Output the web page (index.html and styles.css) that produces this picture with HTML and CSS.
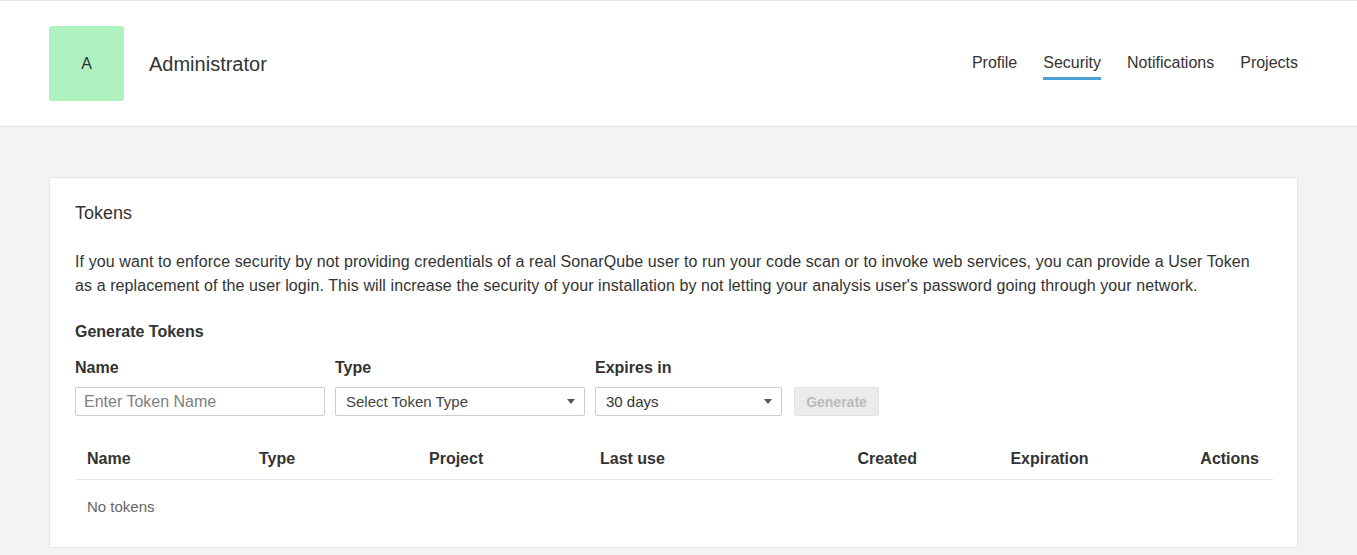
FILE: index.html
```html
<!DOCTYPE html>
<html lang="en">
<head>
<meta charset="utf-8">
<title>Security - Administrator</title>
<link rel="stylesheet" href="styles.css">
</head>
<body>
<header class="account-header">
  <div class="header-inner">
    <div class="user">
      <div class="avatar">A</div>
      <h1 class="user-name">Administrator</h1>
    </div>
    <nav class="account-nav">
      <a class="nav-link" href="#">Profile</a>
      <a class="nav-link active" href="#">Security</a>
      <a class="nav-link" href="#">Notifications</a>
      <a class="nav-link" href="#">Projects</a>
    </nav>
  </div>
</header>
<main class="page">
  <section class="card">
    <h2 class="card-title">Tokens</h2>
    <p class="card-text">If you want to enforce security by not providing credentials of a real SonarQube user to run your code scan or to invoke web services, you can provide a User Token as a replacement of the user login. This will increase the security of your installation by not letting your analysis user's password going through your network.</p>
    <h3 class="section-title">Generate Tokens</h3>
    <form class="token-form">
      <div class="field">
        <label class="field-label">Name</label>
        <input class="text-input" type="text" placeholder="Enter Token Name">
      </div>
      <div class="field">
        <label class="field-label">Type</label>
        <div class="select select-type"><span class="select-value">Select Token Type</span></div>
      </div>
      <div class="field">
        <label class="field-label">Expires in</label>
        <div class="select select-expires"><span class="select-value dark">30 days</span></div>
      </div>
      <button class="btn-generate" type="button" disabled>Generate</button>
    </form>
    <table class="tokens-table">
      <colgroup>
        <col class="c-name"><col class="c-type"><col class="c-project"><col class="c-last"><col class="c-created"><col class="c-exp"><col class="c-actions">
      </colgroup>
      <thead>
        <tr>
          <th>Name</th>
          <th>Type</th>
          <th>Project</th>
          <th>Last use</th>
          <th class="right">Created</th>
          <th class="center">Expiration</th>
          <th class="right actions">Actions</th>
        </tr>
      </thead>
      <tbody>
        <tr><td class="empty" colspan="7">No tokens</td></tr>
      </tbody>
    </table>
  </section>
</main>
</body>
</html>
```
FILE: styles.css
```css
* { box-sizing: border-box; }
html, body { margin: 0; padding: 0; }
body {
  background: #f3f3f3;
  color: #333;
  font-family: "Liberation Sans", Arial, Helvetica, sans-serif;
  font-size: 16px;
  line-height: 24px;
}
.account-header {
  background: #fff;
  border-top: 1px solid #e6e6e6;
  border-bottom: 1px solid #e6e6e6;
}
.header-inner {
  width: 1249px;
  margin-left: 49px;
  padding: 25px 0;
  display: flex;
  align-items: center;
  justify-content: space-between;
}
.user { display: flex; align-items: center; }
.avatar {
  width: 75px;
  height: 75px;
  border-radius: 3px;
  background: #aef2c0;
  color: #333;
  font-size: 16px;
  display: flex;
  align-items: center;
  justify-content: center;
}
.user-name {
  margin: 0 0 0 25px;
  font-size: 20px;
  font-weight: normal;
  line-height: 24px;
}
.account-nav { display: flex; gap: 26px; }
.nav-link {
  color: #333;
  text-decoration: none;
  font-size: 16px;
  line-height: 24px;
  padding-top: 4px;
  padding-bottom: 2px;
  border-bottom: 3px solid transparent;
}
.nav-link.active { border-bottom-color: #4b9fd5; }
.page { padding-top: 50px; }
.card {
  width: 1249px;
  margin-left: 49px;
  background: #fff;
  border: 1px solid #e6e6e6;
  border-radius: 2px;
  padding: 23px 24px 13px 25px;
}
.card-title {
  margin: 0;
  font-size: 18px;
  font-weight: normal;
  line-height: 24px;
}
.card-text {
  margin: 25px 0 0;
  max-width: 1192px;
  letter-spacing: 0.1px;
}
.section-title {
  margin: 22px 0 0;
  font-size: 16px;
  font-weight: bold;
  line-height: 24px;
}
.token-form {
  margin-top: 12px;
  display: flex;
  align-items: flex-end;
  gap: 10px;
}
.field { display: flex; flex-direction: column; gap: 7px; }
.field-label { font-weight: bold; font-size: 16px; line-height: 24px; }
.text-input {
  width: 250px;
  height: 29px;
  border: 1px solid #cdcdcd;
  border-radius: 2px;
  padding: 0 8px;
  font-family: inherit;
  font-size: 16px;
  color: #333;
  outline: none;
}
.text-input::placeholder { color: #808080; }
.select {
  position: relative;
  height: 29px;
  border: 1px solid #cdcdcd;
  border-radius: 2px;
  padding: 0 10px;
  display: flex;
  align-items: center;
  font-size: 15px;
  background: #fff;
}
.select::after {
  content: "";
  position: absolute;
  right: 9px;
  top: 11px;
  border-left: 4px solid transparent;
  border-right: 4px solid transparent;
  border-top: 5px solid #555;
}
.select-type { width: 250px; }
.select-expires { width: 187px; }
.select-value { color: #444; }
.select-value.dark { color: #333; }
.btn-generate {
  margin-left: 2px;
  width: 85px;
  height: 29px;
  background: #ebebeb;
  border: 1px solid #e2e2e2;
  border-radius: 2px;
  color: #bbb;
  font-family: inherit;
  font-size: 14px;
  font-weight: bold;
  padding: 0;
}
.tokens-table {
  margin-top: 23px;
  width: 1198px;
  border-collapse: collapse;
  table-layout: fixed;
}
.c-name { width: 172px; }
.c-type { width: 170px; }
.c-project { width: 171px; }
.c-last { width: 170px; }
.c-created { width: 171px; }
.c-exp { width: 241px; }
.c-actions { width: 103px; }
.tokens-table th {
  text-align: left;
  font-weight: bold;
  font-size: 16px;
  line-height: 24px;
  padding: 8px 12px;
  border-bottom: 1px solid #e6e6e6;
}
.tokens-table th.right { text-align: right; }
.tokens-table th.center { text-align: center; }
.tokens-table th.actions { padding-right: 14px; }
.tokens-table td.empty {
  padding: 15px 12px;
  font-size: 15px;
  line-height: 24px;
  color: #666;
}
```
